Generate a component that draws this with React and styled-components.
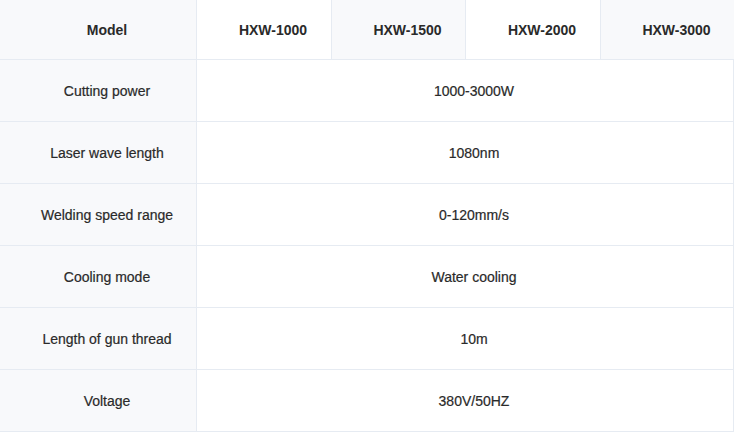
import React from 'react';
import styled, {createGlobalStyle} from 'styled-components';

const COLUMN_WIDTHS = [197, 135, 134, 135, 133];
const MODELS = ['HXW-1000', 'HXW-1500', 'HXW-2000', 'HXW-3000'];

const SPECS = [
  ['Cutting power', '1000-3000W'],
  ['Laser wave length', '1080nm'],
  ['Welding speed range', '0-120mm/s'],
  ['Cooling mode', 'Water cooling'],
  ['Length of gun thread', '10m'],
  ['Voltage', '380V/50HZ']
];

const GlobalStyle = createGlobalStyle`
  html, body {
    margin: 0;
    padding: 0;
    background: #ffffff;
  }
  body {
    font-family: "Liberation Sans", Arial, sans-serif;
  }
`;

const SpecTable = styled.table`
  width: 734px;
  table-layout: fixed;
  border-collapse: separate;
  border-spacing: 0;
  color: #2a2a2a;
  font-size: 14px;
`;

const Cell = styled.td`
  box-sizing: border-box;
  padding: 0 0 0 18px;
  text-align: center;
  vertical-align: middle;
  border-right: 1px solid #e6ebf2;
  border-bottom: 1px solid #e6ebf2;
  background: ${props => (props.shaded ? '#f8f9fb' : '#ffffff')};
  font-weight: ${props => (props.bold ? 700 : 400)};
  height: ${props => (props.header ? '60px' : '62px')};
  -webkit-text-stroke: ${props => (props.bold ? '0' : '0.2px')};

  &:last-child {
    border-right: ${props => (props.span ? '1px solid #e6ebf2' : '0')};
  }
`;

const HeaderRow = ({models}) => (
  <tr>
    <Cell header bold shaded>Model</Cell>
    {models.map((model, i) => (
      <Cell key={model} header bold shaded={i % 2 === 1}>
        {model}
      </Cell>
    ))}
  </tr>
);

const SpecRow = ({label, value, span}) => (
  <tr>
    <Cell shaded>{label}</Cell>
    <Cell colSpan={span} span>{value}</Cell>
  </tr>
);

export default function App() {
  return (
    <>
      <GlobalStyle />
      <SpecTable>
        <colgroup>
          {COLUMN_WIDTHS.map((w, i) => (
            <col key={i} style={{width: w}} />
          ))}
        </colgroup>
        <tbody>
          <HeaderRow models={MODELS} />
          {SPECS.map(([label, value]) => (
            <SpecRow key={label} label={label} value={value} span={MODELS.length} />
          ))}
        </tbody>
      </SpecTable>
    </>
  );
}
